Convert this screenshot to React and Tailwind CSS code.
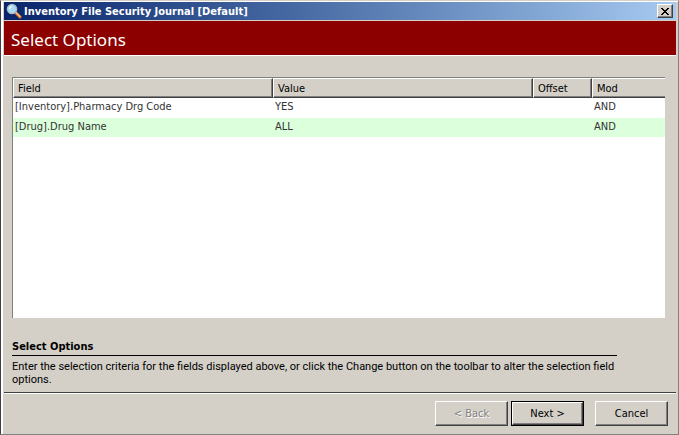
import React from "react";

const COLUMNS = [
  { label: "Field", width: "w-[260px]" },
  { label: "Value", width: "w-[260px]" },
  { label: "Offset", width: "w-[59px]" },
  { label: "Mod", width: "border-r-0 shadow-[inset_0_-1px_0_#808080]" },
];

const ROWS = [
  { field: "[Inventory].Pharmacy Drg Code", value: "YES", offset: "", mod: "AND" },
  { field: "[Drug].Drug Name", value: "ALL", offset: "", mod: "AND" },
];

const EDGE = "border border-t-white border-l-white border-r-[#404040] border-b-[#404040]";
const RAISED = `${EDGE} shadow-[inset_-1px_-1px_0_#808080]`;
const CELL = "border-b border-white pl-[2px] pt-[2px] align-top";

function SearchIcon() {
  return (
    <svg className="size-4 shrink-0" viewBox="0 0 16 16" aria-hidden="true">
      <path d="M10 10l4 4" stroke="#d9772c" strokeWidth="3" strokeLinecap="round" />
      <path d="M10 9.500l4 4" stroke="#ffbd7a" strokeWidth="1.500" strokeLinecap="round" />
      <circle cx="6" cy="6" r="4.600" fill="#a9dbf2" stroke="#a9bcc6" strokeWidth="1.400" />
      <path d="M3.500 6a2.500 2.500 0 0 1 2.500-2.500" fill="none" stroke="#e8f8ff" strokeWidth="1.400" />
    </svg>
  );
}

function TitleBar() {
  return (
    <div className="flex h-[18px] items-center bg-linear-to-r from-[#0a246a] to-[#a6caf0] pl-[2px] pr-[3px]">
      <SearchIcon />
      <span className="ml-[2px] flex-1 truncate font-bold text-white">Inventory File Security Journal [Default]</span>
      <button type="button" aria-label="Close" className={`flex h-[14px] w-4 items-center justify-center bg-[#d4d0c8] ${RAISED}`}>
        <svg className="h-[7px] w-2" viewBox="0 0 8 7" shapeRendering="crispEdges" aria-hidden="true">
          <path
            d="M0 0h2v1H0zM6 0h2v1H6zM1 1h2v1H1zM5 1h2v1H5zM2 2h4v1H2zM3 3h2v1H3zM2 4h4v1H2zM1 5h2v1H1zM5 5h2v1H5zM0 6h2v1H0zM6 6h2v1H6z"
            fill="#000"
          />
        </svg>
      </button>
    </div>
  );
}

function OptionsTable() {
  return (
    <div className="min-h-[241px] border-l border-t border-[#808080] bg-white">
      <table className="w-full table-fixed border-separate border-spacing-0 text-left">
        <thead>
          <tr className="h-5">
            {COLUMNS.map((col, i) => (
              <th
                key={col.label}
                className={`bg-[#d4d0c8] py-0 pl-1 font-normal ${i < COLUMNS.length - 1 ? RAISED : EDGE} ${col.width}`}
              >
                {col.label}
              </th>
            ))}
          </tr>
        </thead>
        <tbody className="text-[#333]">
          {ROWS.map((row) => (
            <tr key={row.field} className="h-5 even:bg-[#dcffdc]">
              <td className={CELL}>{row.field}</td>
              <td className={CELL}>{row.value}</td>
              <td className={CELL}>{row.offset}</td>
              <td className={CELL}>{row.mod}</td>
            </tr>
          ))}
        </tbody>
      </table>
    </div>
  );
}

export default function App() {
  return (
    <div className="flex min-h-screen flex-col border border-[#d4d0c8] border-b-[#808080] border-l-[#404040] border-r-[#808080] bg-[#d4d0c8] font-['DejaVu_Sans_Condensed','DejaVu_Sans',sans-serif] text-[11px] leading-[13px] text-black">
      <div className="flex flex-1 flex-col border-l-2 border-t border-white pl-px pr-[2px]">
        <TitleBar />
        <header className="mt-px flex h-[34px] items-center bg-[#8c0000] pl-[7px] pt-1 font-['Noto_Sans',sans-serif] text-[17px] leading-5 text-white">
          <h1>Select Options</h1>
        </header>
        <main className="flex-1 border-t border-white px-2 pr-[11px] pt-[21px]">
          <OptionsTable />
          <section className="mt-[22px] pr-12">
            <h2 className="border-b border-black pb-[2px] font-bold">Select Options</h2>
            <p className="mt-1 font-[Roboto,sans-serif]">
              Enter the selection criteria for the fields displayed above, or click the Change button on the toolbar to alter the selection field options.
            </p>
          </section>
        </main>
        <footer className="flex border-t border-[#404040]">
          <div className="flex flex-1 justify-end border-t border-white pb-[8px] pr-2 pt-[7px]">
            <button type="button" disabled className={`h-[25px] w-[73px] text-[#808080] [text-shadow:1px_1px_0_#fff] ${RAISED}`}>
              &lt; Back
            </button>
            <div className="ml-[3px] border border-black">
              <button type="button" className={`h-[23px] w-[71px] ${RAISED}`}>
                Next &gt;
              </button>
            </div>
            <button type="button" className={`ml-[11px] h-[25px] w-[73px] ${RAISED}`}>
              Cancel
            </button>
          </div>
        </footer>
      </div>
    </div>
  );
}
